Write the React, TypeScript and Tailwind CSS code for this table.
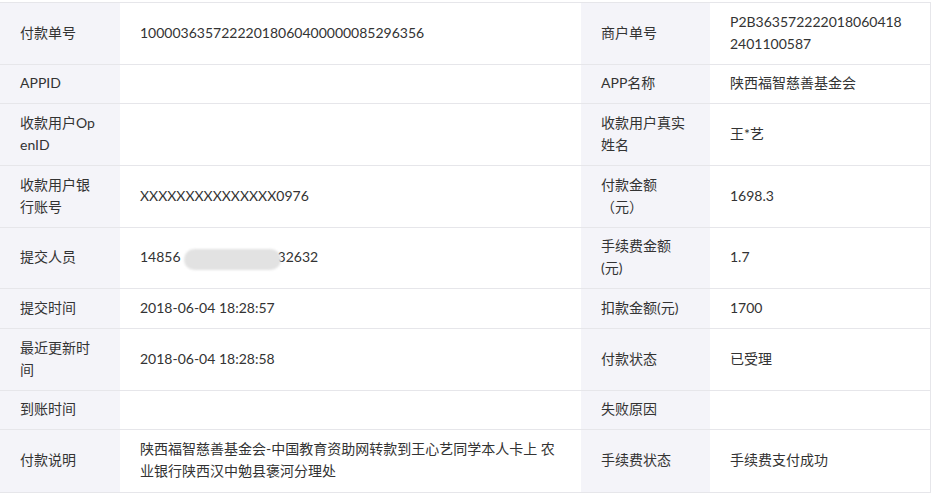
type Row = {
  h: number;
  l1: string;
  v1: React.ReactNode;
  l2: string;
  v2: React.ReactNode;
};

// phone number with the middle digits smudged out
const Masked = () => (
  <span className="relative">
    14856
    <span className="inline-block w-[97px]" />
    32632
    <span className="absolute left-[44px] top-[1px] h-[21px] w-[97px] rounded-full bg-[#e2e2e2] blur-[1px]" />
  </span>
);

const rows: Row[] = [
  {
    h: 62,
    l1: "付款单号",
    v1: "10000363572222018060400000085296356",
    l2: "商户单号",
    v2: "P2B3635722220180604182401100587",
  },
  { h: 39, l1: "APPID", v1: "", l2: "APP名称", v2: "陕西福智慈善基金会" },
  { h: 62, l1: "收款用户OpenID", v1: "", l2: "收款用户真实姓名", v2: "王*艺" },
  {
    h: 62,
    l1: "收款用户银行账号",
    v1: "XXXXXXXXXXXXXXX0976",
    l2: "付款金额（元）",
    v2: "1698.3",
  },
  { h: 61, l1: "提交人员", v1: <Masked />, l2: "手续费金额(元)", v2: "1.7" },
  { h: 40, l1: "提交时间", v1: "2018-06-04 18:28:57", l2: "扣款金额(元)", v2: "1700" },
  { h: 62, l1: "最近更新时间", v1: "2018-06-04 18:28:58", l2: "付款状态", v2: "已受理" },
  { h: 39, l1: "到账时间", v1: "", l2: "失败原因", v2: "" },
  {
    h: 63,
    l1: "付款说明",
    v1: "陕西福智慈善基金会-中国教育资助网转款到王心艺同学本人卡上 农业银行陕西汉中勉县褒河分理处",
    l2: "手续费状态",
    v2: "手续费支付成功",
  },
];

export default function App() {
  return (
    <div
      className="min-h-[499px] w-[936px] bg-white pt-[2px] text-[14px] leading-[22px] text-[#333]"
      style={{ fontFamily: 'Lato, "Noto Sans CJK SC", sans-serif' }}
    >
      <table className="w-[930px] table-fixed border-collapse">
        <colgroup>
          <col className="w-[120px]" />
          <col className="w-[461px]" />
          <col className="w-[129px]" />
          <col className="w-[220px]" />
        </colgroup>
        <tbody>
          {rows.map((r, i) => (
            <tr key={i} style={{ height: r.h }} className="border-y border-[#e6e6ea]">
              <td className="bg-[#f4f4f9] px-5 pb-[2px] align-middle break-all">{r.l1}</td>
              <td className="px-5 pb-[2px] align-middle break-all">{r.v1}</td>
              <td className="bg-[#f4f4f9] px-5 pb-[2px] align-middle break-all">{r.l2}</td>
              <td className="border-r border-[#e6e6ea] pl-5 pr-[26px] pb-[2px] align-middle break-all">
                {r.v2}
              </td>
            </tr>
          ))}
        </tbody>
      </table>
    </div>
  );
}
